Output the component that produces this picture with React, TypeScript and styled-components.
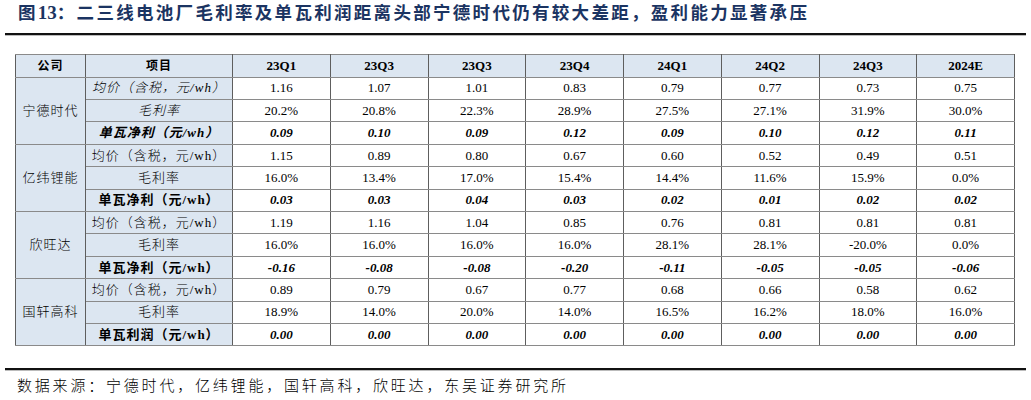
import React from "react";
import styled, { createGlobalStyle } from "styled-components";

const GlobalStyle = createGlobalStyle`
  html, body {
    margin: 0;
    padding: 0;
    background: #ffffff;
  }
`;

type Company = {
  name: string;
  italic: boolean;
  netLabel: string;
  price: string[];
  margin: string[];
  net: string[];
};

const quarters = ["23Q1", "23Q3", "23Q3", "23Q4", "24Q1", "24Q2", "24Q3", "2024E"];

const companies: Company[] = [
  {
    name: "宁德时代",
    italic: true,
    netLabel: "单瓦净利（元/wh）",
    price: ["1.16", "1.07", "1.01", "0.83", "0.79", "0.77", "0.73", "0.75"],
    margin: ["20.2%", "20.8%", "22.3%", "28.9%", "27.5%", "27.1%", "31.9%", "30.0%"],
    net: ["0.09", "0.10", "0.09", "0.12", "0.09", "0.10", "0.12", "0.11"],
  },
  {
    name: "亿纬锂能",
    italic: false,
    netLabel: "单瓦净利（元/wh）",
    price: ["1.15", "0.89", "0.80", "0.67", "0.60", "0.52", "0.49", "0.51"],
    margin: ["16.0%", "13.4%", "17.0%", "15.4%", "14.4%", "11.6%", "15.9%", "0.0%"],
    net: ["0.03", "0.03", "0.04", "0.03", "0.02", "0.01", "0.02", "0.02"],
  },
  {
    name: "欣旺达",
    italic: false,
    netLabel: "单瓦净利（元/wh）",
    price: ["1.19", "1.16", "1.04", "0.85", "0.76", "0.81", "0.81", "0.81"],
    margin: ["16.0%", "16.0%", "16.0%", "16.0%", "28.1%", "28.1%", "-20.0%", "0.0%"],
    net: ["-0.16", "-0.08", "-0.08", "-0.20", "-0.11", "-0.05", "-0.05", "-0.06"],
  },
  {
    name: "国轩高科",
    italic: false,
    netLabel: "单瓦利润（元/wh）",
    price: ["0.89", "0.79", "0.67", "0.77", "0.68", "0.66", "0.58", "0.62"],
    margin: ["18.9%", "14.0%", "20.0%", "14.0%", "16.5%", "16.2%", "18.0%", "16.0%"],
    net: ["0.00", "0.00", "0.00", "0.00", "0.00", "0.00", "0.00", "0.00"],
  },
];

const Page = styled.div`
  width: 1031px;
  height: 400px;
  padding: 0 5px;
  box-sizing: border-box;
  font-family: "Liberation Serif", "Noto Sans CJK SC", serif;
  color: #000;
  overflow: hidden;
`;

const Title = styled.h1`
  margin: 0;
  height: 33px;
  padding: 2px 0 0 13px;
  box-sizing: border-box;
  font-size: 17.5px;
  line-height: 22px;
  font-weight: 700;
  letter-spacing: 2.3px;
  color: #1b3462;
  white-space: nowrap;

  b {
    font-family: "Liberation Serif", serif;
    font-size: 19px;
    letter-spacing: 0;
  }
`;

const Rule = styled.div`
  height: 2px;
  width: 1021px;
  background: #111;
  box-shadow: 0 1px 0 #bbb;
`;

const TableWrap = styled.div`
  padding: 19px 0 0 10px;
  height: 333px;
  box-sizing: border-box;
`;

const Table = styled.table`
  border-collapse: collapse;
  table-layout: fixed;
  width: 999px;
  font-size: 13px;

  td, th {
    height: 21.4px;
    padding: 0;
    text-align: center;
    vertical-align: middle;
    border-top: 1px solid #8a8a8a;
    border-bottom: 1px solid #8a8a8a;
    border-left: 1px solid #5e5e5e;
    border-right: 1px solid #5e5e5e;
    white-space: nowrap;
    line-height: 16px;
  }
`;

const HeadCell = styled.th<{ $cjk?: boolean }>`
  background: #dce6f1;
  font-weight: 700;
  font-size: ${(p) => (p.$cjk ? "12px" : "13px")};
  letter-spacing: ${(p) => (p.$cjk ? "1px" : "0")};
  height: 21.7px !important;
`;

const CompanyCell = styled.td`
  background: #dce6f1;
  font-size: 13px;
  font-weight: 300;
  letter-spacing: 1px;
`;

const ItemCell = styled.td<{ $italic?: boolean; $bold?: boolean }>`
  background: #dce6f1;
  font-size: 13px;
  letter-spacing: 1px;
  font-style: ${(p) => (p.$italic ? "italic" : "normal")};
  font-weight: ${(p) => (p.$bold ? 700 : 300)};
`;

const ValueCell = styled.td<{ $strong?: boolean }>`
  background: #fff;
  font-style: ${(p) => (p.$strong ? "italic" : "normal")};
  font-weight: ${(p) => (p.$strong ? 700 : 400)};
`;

const Source = styled.p`
  margin: 0;
  padding: 6px 0 0 12px;
  font-size: 15px;
  font-weight: 300;
  line-height: 20px;
  letter-spacing: 2.8px;
  white-space: nowrap;
`;

const CompanyRows: React.FC<{ company: Company }> = ({ company }) => (
  <>
    <tr>
      <CompanyCell rowSpan={3}>{company.name}</CompanyCell>
      <ItemCell $italic={company.italic}>均价（含税，元/wh）</ItemCell>
      {company.price.map((v, i) => (
        <ValueCell key={i}>{v}</ValueCell>
      ))}
    </tr>
    <tr>
      <ItemCell $italic={company.italic}>毛利率</ItemCell>
      {company.margin.map((v, i) => (
        <ValueCell key={i}>{v}</ValueCell>
      ))}
    </tr>
    <tr>
      <ItemCell $italic={company.italic} $bold>
        {company.netLabel}
      </ItemCell>
      {company.net.map((v, i) => (
        <ValueCell key={i} $strong>
          {v}
        </ValueCell>
      ))}
    </tr>
  </>
);

const App: React.FC = () => {
  return (
    <Page>
      <GlobalStyle />
      <Title>
        图<b>13</b>：二三线电池厂毛利率及单瓦利润距离头部宁德时代仍有较大差距，盈利能力显著承压
      </Title>
      <Rule />
      <TableWrap>
        <Table>
          <colgroup>
            <col style={{ width: 70 }} />
            <col style={{ width: 147 }} />
            {quarters.map((_, i) => (
              <col key={i} style={{ width: 97.75 }} />
            ))}
          </colgroup>
          <thead>
            <tr>
              <HeadCell $cjk>公司</HeadCell>
              <HeadCell $cjk>项目</HeadCell>
              {quarters.map((q, i) => (
                <HeadCell key={i}>{q}</HeadCell>
              ))}
            </tr>
          </thead>
          <tbody>
            {companies.map((c) => (
              <CompanyRows key={c.name} company={c} />
            ))}
          </tbody>
        </Table>
      </TableWrap>
      <Rule />
      <Source>数据来源：宁德时代，亿纬锂能，国轩高科，欣旺达，东吴证券研究所</Source>
    </Page>
  );
};

export default App;
